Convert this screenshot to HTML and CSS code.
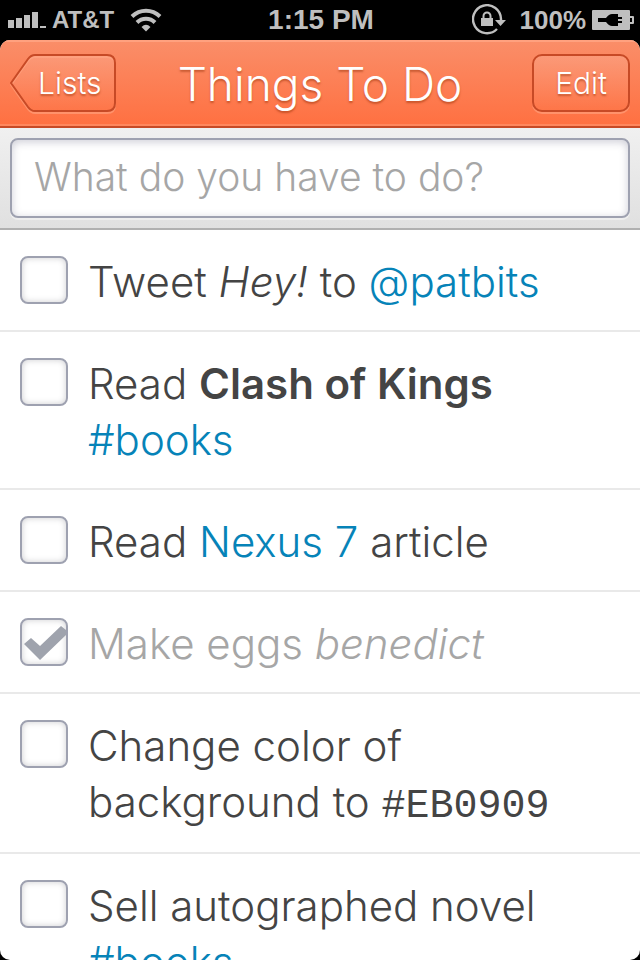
FILE: index.html
```html
<!DOCTYPE html>
<html lang="en">
<head>
<meta charset="utf-8">
<meta name="viewport" content="width=device-width, initial-scale=1">
<title>Things To Do</title>
<link rel="stylesheet" href="styles.css">
</head>
<body>
<div class="phone">
  <div class="status">
    <div class="status-left">
      <svg class="signal" width="38" height="16" viewBox="0 0 38 16" aria-hidden="true"><path d="M0 8h6v8H0zM8 6h6v10H8zM16 3h6v13h-6zM24 0h6v16h-6zM32 14h6v2h-6z"/></svg>
      <span class="carrier">AT&amp;T</span>
      <svg class="wifi" width="32" height="24" viewBox="0 0 32 24" aria-hidden="true"><g fill="none" stroke="currentColor"><path d="M2 8.500C10 .8 22 .8 30 8.500" stroke-width="4"/><path d="M7 14.500C12 9.500 20 9.500 25 14.500" stroke-width="4"/></g><path d="M11.500 19Q16 14.500 20.500 19L16 23.500Z"/></svg>
    </div>
    <span class="time">1:15 PM</span>
    <div class="status-right">
      <svg class="lock" width="34" height="32" viewBox="0 0 34 32" aria-hidden="true"><g fill="none" stroke="currentColor"><path d="M25 25A14 14 0 1 1 29 15v2" stroke-width="2.400"/><path d="M11.500 15v-3a3.500 3.500 0 0 1 7 0v3" stroke-width="2"/></g><path d="M9 14h12v8H9zM23 16h11l-5.500 6z"/></svg>
      <span class="percent">100%</span>
      <svg class="battery" width="42" height="20" viewBox="0 0 42 20" aria-hidden="true"><path fill-rule="evenodd" d="M1 0h36q1 0 1 1v5h3q1 0 1 1v6q0 1-1 1h-3v5q0 1-1 1H1q-1 0-1-1V1q0-1 1-1zM38 8v4h2V8zM6 8v4h8q3 4 6 4h6v-3h4v-2h-4V9h4V7h-4V4h-6q-3 0-6 4z"/></svg>
    </div>
  </div>
  <div class="app">
    <header class="bar">
      <a class="back" href="#lists">
        <svg class="back-shape" width="106" height="62" viewBox="0 0 106 62" aria-hidden="true">
          <defs><linearGradient id="tint" x1="0" y1="0" x2="0" y2="1"><stop offset="0" stop-color="#fff" stop-opacity=".14"/><stop offset="1" stop-color="#fff" stop-opacity="0"/></linearGradient></defs>
          <path d="M25 3H97Q105 3 105 11V51Q105 59 97 59H25Q21 59 18 55L1 31L18 7Q21 3 25 3Z" fill="none" stroke="#ff926b" stroke-width="2"/>
          <path d="M25 1H97Q105 1 105 9V49Q105 57 97 57H25Q21 57 18 53L1 29L18 5Q21 1 25 1Z" fill="url(#tint)" stroke="#c74a26" stroke-width="2"/>
        </svg>
        <span class="back-label">Lists</span>
      </a>
      <h1 class="title">Things To Do</h1>
      <button class="edit" type="button">Edit</button>
    </header>
    <form class="add">
      <input class="entry" type="text" placeholder="What do you have to do?" aria-label="New task">
    </form>
    <ul class="tasks">
      <li class="task"><input class="tick" type="checkbox" id="t1"><label class="text" for="t1">Tweet <em>Hey!</em> to <a href="#patbits">@patbits</a></label></li>
      <li class="task"><input class="tick" type="checkbox" id="t2"><label class="text" for="t2">Read <strong>Clash of Kings</strong> <a href="#books">#books</a></label></li>
      <li class="task"><input class="tick" type="checkbox" id="t3"><label class="text" for="t3">Read <a href="#nexus">Nexus 7</a> article</label></li>
      <li class="task done">
        <span class="tick-wrap"><input class="tick" type="checkbox" id="t4" checked><svg class="mark" width="48" height="48" viewBox="0 0 48 48" aria-hidden="true"><path d="M4 26L11 20L20 28L41 8L46 12V17L20 42Z"/></svg></span>
        <label class="text" for="t4">Make eggs <em>benedict</em></label></li>
      <li class="task"><input class="tick" type="checkbox" id="t5"><label class="text" for="t5">Change color of background to <code>#EB0909</code></label></li>
      <li class="task"><input class="tick" type="checkbox" id="t6"><label class="text" for="t6">Sell autographed novel <a href="#books">#books</a></label></li>
    </ul>
  </div>
</div>
</body>
</html>
```
FILE: styles.css
```css
* { box-sizing: border-box; }

body {
  margin: 0;
  background: #000;
  color: #444;
  font-family: Inter, "Liberation Sans", sans-serif;
}

.phone {
  display: flex;
  flex-direction: column;
  height: 100vh;
}

.status {
  display: grid;
  grid-template-columns: 1fr auto 1fr;
  align-items: center;
  height: 40px;
  padding: 0 6px 0 8px;
  color: #bfbfbf;
  font: bold 26px/36px "Liberation Sans", sans-serif;
}

.status svg { fill: currentColor; flex: none; }

.status-left,
.status-right {
  display: flex;
  align-items: center;
}

.status-left { gap: 6px; }
.status-right { justify-content: flex-end; gap: 6px; }
.carrier { font-size: 24px; padding-right: 10px; }
.percent { padding-left: 8px; }
.time { font-size: 28px; }

.app {
  flex: 1;
  min-height: 0;
  overflow: hidden;
  border-radius: 10px;
  background: #fff;
}

.bar {
  display: grid;
  grid-template-columns: 1fr auto 1fr;
  align-items: center;
  height: 88px;
  padding: 0 10px;
  border-bottom: 2px solid #c74a26;
  background: linear-gradient(#fa8e69, #ff7041);
  box-shadow: inset 0 2px #ffa17f, inset 0 -2px #ff875d;
  color: #fff;
  text-shadow: 0 2px 2px rgba(150, 50, 10, .5);
}

.title {
  margin: 0;
  padding-top: 2px;
  font-size: 46px;
  line-height: 56px;
  font-weight: 300;
}

.back {
  display: grid;
  justify-self: start;
  height: 58px;
  color: inherit;
  text-decoration: none;
}

.back-shape,
.back-label { grid-area: 1 / 1; }

.back-label {
  padding-left: 28px;
  font-size: 30px;
  line-height: 58px;
  font-weight: 300;
}

.edit {
  justify-self: end;
  height: 58px;
  padding: 0 21px;
  border: 2px solid #c74a26;
  border-radius: 10px;
  background: linear-gradient(rgba(255, 255, 255, .14), rgba(255, 255, 255, 0));
  box-shadow: 0 2px #ff926b;
  color: inherit;
  font: 300 30px/54px Inter, "Liberation Sans", sans-serif;
  text-shadow: inherit;
}

.add {
  padding: 10px;
  border-bottom: 2px solid #b0b0b0;
  background: linear-gradient(#f0f0f0, #e0e0e0);
}

.entry {
  display: block;
  width: 100%;
  height: 80px;
  padding: 0 22px 4px;
  border: 2px solid #9ea1b0;
  border-radius: 8px;
  background: #fff;
  box-shadow: inset 0 2px 8px rgba(90, 90, 120, .3), 0 2px #eee;
  color: #444;
  font: 300 39px/72px Inter, "Liberation Sans", sans-serif;
}

.entry::placeholder { color: #a6a6a6; opacity: 1; }

.tasks {
  margin: 0;
  padding: 0;
  list-style: none;
}

.task {
  display: flex;
  align-items: flex-start;
  gap: 20px;
  padding: 24px 20px 20px;
  border-bottom: 2px solid #e9e9e9;
}

.tick {
  flex: none;
  appearance: none;
  width: 48px;
  height: 48px;
  margin: 2px 0 0;
  border: 2px solid #9ea1b0;
  border-radius: 8px;
  background: #fff;
  box-shadow: inset 0 0 6px rgba(90, 90, 100, .3);
}

.tick-wrap { display: grid; flex: none; }
.tick-wrap .tick { grid-area: 1 / 1; }

.mark {
  grid-area: 1 / 1;
  align-self: end;
  fill: #9fa3ad;
  pointer-events: none;
}

.text {
  flex: 1;
  font-size: 42px;
  line-height: 56px;
  font-weight: 300;
}

.text a { color: #0683b8; text-decoration: none; }
.text strong { font-weight: 600; }
.text code {
  font-family: "Liberation Mono", monospace;
  font-size: 40px;
  font-weight: 400;
  line-height: 50px;
}
.done { color: #a6a6a6; }
```
